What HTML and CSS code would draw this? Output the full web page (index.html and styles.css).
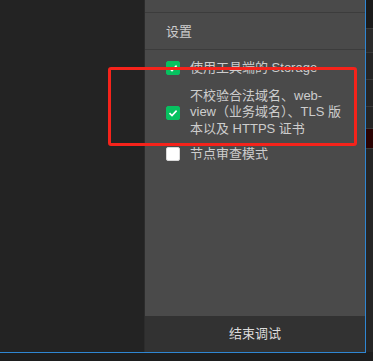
FILE: index.html
```html
<!DOCTYPE html>
<html lang="zh-CN">
<head>
    <meta charset="UTF-8">
    <meta name="viewport" content="width=device-width, initial-scale=1.0">
    <title>调试设置</title>
    <link rel="stylesheet" href="styles.css">
</head>
<body>
    <div class="screen">
        <div class="main">
            <div class="side"></div>
            <div class="panel">
                <div class="top-clip"><span>调试器</span></div>
                <div class="section-title">设置</div>

                <div class="options">
                    <label class="option first">
                        <span class="check on">
                            <svg width="10" height="10" viewBox="0 0 10 10"><polyline points="1.5,5.2 4,7.6 8.6,2.6" fill="none" stroke="#fff" stroke-width="1.6"/></svg>
                        </span>
                        <span class="text">使用工具端的 Storage</span>
                    </label>
                    <label class="option second">
                        <span class="check on">
                            <svg width="10" height="10" viewBox="0 0 10 10"><polyline points="1.5,5.2 4,7.6 8.6,2.6" fill="none" stroke="#fff" stroke-width="1.6"/></svg>
                        </span>
                        <span class="text">不校验合法域名、web-<br>view（业务域名）、TLS 版<br>本以及 HTTPS 证书</span>
                    </label>
                    <label class="option third">
                        <span class="check"></span>
                        <span class="text">节点审查模式</span>
                    </label>
                </div>

                <div class="footer">结束调试</div>
            </div>
        </div>

        <div class="strip">
            <div class="s1"></div>
            <div class="s2"></div>
            <div class="s3"></div>
            <div class="s3"></div>
            <div class="s4"></div>
            <div class="s5"></div>
            <div class="s6"></div>
        </div>

        <!-- annotation box -->
        <div class="mark"></div>
    </div>
</body>
</html>
```

FILE: styles.css
```css
body {
    margin: 0;
    background-color: #1e1e1e;
    font-family: "Liberation Sans", "Noto Sans CJK SC", sans-serif;
    font-size: 13px;
    color: #cdcdcd;
}

.screen {
    position: relative;
    display: flex;
    width: 373px;
    height: 361px;
    overflow: hidden;
}

.main {
    display: flex;
    width: 365px;
    height: 352px;
    border-right: 1px solid #2f86d2;
    border-bottom: 1px solid #2f86d2;
}

.side {
    width: 144px;
    background-color: #232323;
}

.panel {
    display: flex;
    flex-direction: column;
    width: 220px;
    border-left: 1px solid #2c2c2c;
    background-color: #4a4a4a;
}

.top-clip {
    height: 12px;
    overflow: hidden;
    display: flex;
    align-items: flex-end;
    padding-left: 22px;
    border-bottom: 1px solid #3c3c3c;
}

.top-clip span {
    line-height: 14px;
    margin-bottom: 12px;
}

.section-title {
    height: 34px;
    padding: 2px 0 0 21px;
    line-height: 34px;
    border-bottom: 1px solid #3c3c3c;
}

.options {
    display: flex;
    flex-direction: column;
    padding: 10px 0 0 21px;
}

.option {
    display: flex;
    align-items: center;
    gap: 10px;
    line-height: 16px;
}

.option.second {
    margin-top: 12px;
    line-height: 16.4px;
}

.option.third {
    margin-top: 9px;
}

.check {
    display: flex;
    justify-content: center;
    align-items: center;
    width: 14px;
    height: 14px;
    box-sizing: border-box;
    border-radius: 2px;
    background-color: #fff;
    border: 1px solid #d8d8d8;
}

.check.on {
    background-color: #07c160;
    border-color: #07c160;
}

.text {
    white-space: nowrap;
}

.footer {
    margin-top: auto;
    height: 36px;
    line-height: 36px;
    text-align: center;
    background-color: #323232;
    color: #dcdcdc;
}

.strip {
    display: flex;
    flex-direction: column;
    width: 7px;
    height: 352px;
    background-color: #262626;
}

.strip div {
    border-bottom: 1px solid #3a3a3a;
}

.s1 { height: 28px; background-color: #1b1b1b; }
.s2 { height: 23px; background-color: #2a2a2a; }
.s3 { height: 26px; background-color: #262626; }
.s4 { height: 21px; background-color: #262626; }
.s5 { height: 19px; background-color: #2b0303; }
.s6 { flex: 1; background-color: #262626; border-bottom: none !important; }

.mark {
    position: absolute;
    left: 108px;
    top: 67px;
    width: 243px;
    height: 73px;
    border: 3px solid #f5231b;
    border-radius: 3px;
}
```
